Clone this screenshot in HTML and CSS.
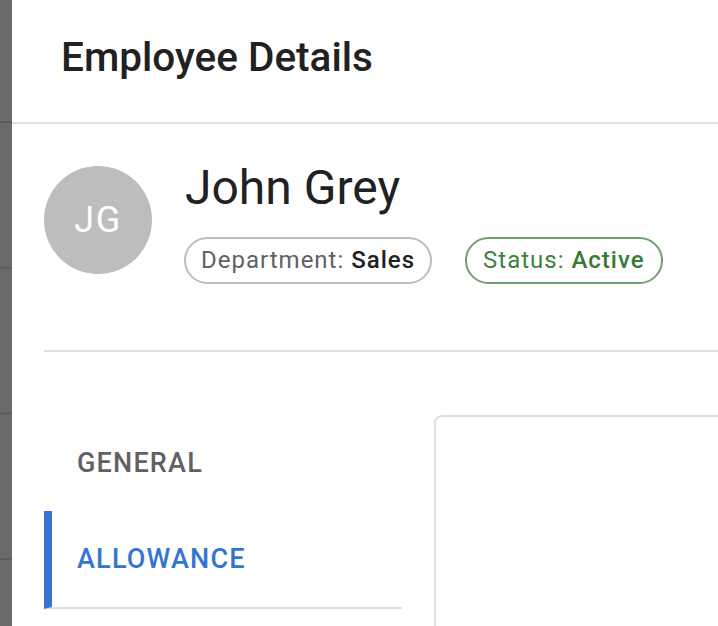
FILE: index.html
```html
<!DOCTYPE html>
<html>
<head>
<meta charset="utf-8">
<link rel="stylesheet" href="styles.css">
</head>
<body>
<div class="backdrop"></div>
<div class="drawer">
  <header class="drawer-header">
    <h1 class="title">Employee Details</h1>
  </header>
  <section class="profile">
    <div class="avatar">JG</div>
    <div class="profile-info">
      <div class="name">John Grey</div>
      <div class="chips">
        <span class="chip"><span class="chip-label">Department: </span><b class="chip-value">Sales</b></span>
        <span class="chip chip-green"><span class="chip-label">Status: </span><b class="chip-value">Active</b></span>
      </div>
    </div>
  </section>
  <hr class="divider">
  <section class="content">
    <nav class="tabs">
      <div class="tab">GENERAL</div>
      <div class="tab tab-active">ALLOWANCE</div>
    </nav>
    <div class="card"></div>
  </section>
</div>
</body>
</html>
```

FILE: styles.css
```css
html, body {
  margin: 0;
  padding: 0;
  height: 626px;
  overflow: hidden;
}
body {
  display: flex;
  font-family: Roboto, "Liberation Sans", sans-serif;
  color: #212121;
  background: #fff;
}
.backdrop {
  width: 12px;
  flex: none;
  height: 626px;
  background-color: #6b6b6b;
  background-image: linear-gradient(to bottom, #5c5c5c 0, #5c5c5c 2px, transparent 2px);
  background-size: 100% 145.67px;
  background-position: 0 121px;
}
.drawer {
  flex: 1;
  min-width: 0;
  overflow: hidden;
  background: #fff;
}
.drawer-header {
  box-sizing: border-box;
  height: 124px;
  border-bottom: 2px solid #e0e0e0;
  display: flex;
  align-items: center;
  padding: 0 0 7px 49px;
}
.title {
  margin: 0;
  font-size: 40.5px;
  font-weight: 500;
  line-height: 1;
  color: #212121;
}
.profile {
  display: flex;
  align-items: flex-start;
  padding: 42px 0 0 32px;
}
.avatar {
  width: 108px;
  height: 108px;
  border-radius: 50%;
  background: #bdbdbd;
  color: #fff;
  font-size: 36px;
  letter-spacing: 1.5px;
  display: flex;
  align-items: center;
  justify-content: center;
  flex: none;
  margin-right: 33px;
}
.profile-info {
  margin-top: -2px;
  margin-left: -1px;
}
.name {
  font-size: 48px;
  line-height: 1;
  color: #212121;
  margin-left: 1px;
}
.chips {
  display: flex;
  gap: 33px;
  margin-top: 25px;
}
.chip {
  box-sizing: border-box;
  display: inline-block;
  height: 47px;
  line-height: 43px;
  border: 2px solid #bdbdbd;
  border-radius: 24px;
  padding: 0 15px;
  font-size: 24px;
  letter-spacing: 1px;
  white-space: pre;
}
.chip-label {
  color: #616161;
}
.chip-value {
  font-weight: 500;
  color: #212121;
}
.chip-green {
  border-color: #72a072;
  padding: 0 16px;
}
.chip-green .chip-label {
  color: #3f7f3f;
}
.chip-green .chip-value {
  color: #367a36;
}
.divider {
  margin: 66px 0 0 32px;
  border: 0;
  border-top: 2px solid #e0e0e0;
  height: 0;
}
.content {
  display: grid;
  grid-template-columns: 358px 400px;
  column-gap: 32px;
  margin: 63px 0 0 32px;
}
.tabs {
  display: flex;
  flex-direction: column;
}
.tab {
  height: 96px;
  box-sizing: border-box;
  display: flex;
  align-items: center;
  padding-left: 33px;
  font-size: 27px;
  font-weight: 500;
  letter-spacing: 1.2px;
  color: #616161;
}
.tab-active {
  color: #3574d0;
  border-left: 8px solid #3574d0;
  padding-left: 25px;
  border-bottom: 2px solid #e0e0e0;
  height: 98px;
}
.card {
  border: 2px solid #e0e0e0;
  border-radius: 8px;
  height: 400px;
}
```
